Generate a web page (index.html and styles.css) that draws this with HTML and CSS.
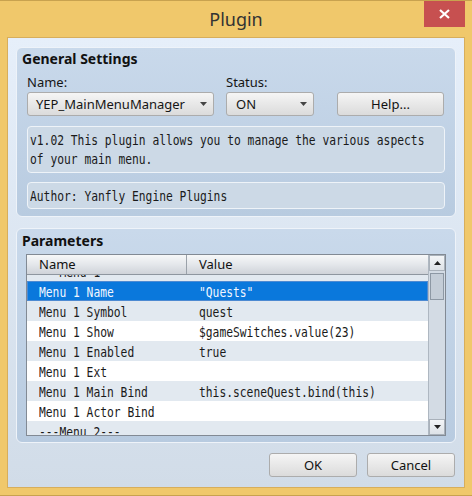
FILE: index.html
```html
<!DOCTYPE html>
<html>
<head>
<meta charset="utf-8">
<title>Plugin</title>
<link rel="stylesheet" href="styles.css">
</head>
<body>
<div class="window">
  <div class="titlebar">
    <div class="title">Plugin</div>
    <div class="close"><svg width="11" height="10" viewBox="0 0 11 10"><path d="M1 1L10 9M10 1L1 9" stroke="#fff" stroke-width="2.2" fill="none"/></svg></div>
  </div>
  <div class="client">
    <section class="group general">
      <div class="group-title">General Settings</div>
      <div class="fields">
        <div class="field name-field">
          <label>Name:</label>
          <div class="combo"><span>YEP_MainMenuManager</span><svg width="7" height="4" viewBox="0 0 7 4"><path d="M0 0H7L3.5 4Z" fill="#444"/></svg></div>
        </div>
        <div class="field status-field">
          <label>Status:</label>
          <div class="combo status"><span>ON</span><svg width="7" height="4" viewBox="0 0 7 4"><path d="M0 0H7L3.5 4Z" fill="#444"/></svg></div>
        </div>
        <button class="btn help">Help...</button>
      </div>
      <div class="textbox desc"><span class="mono">v1.02 This plugin allows you to manage the various aspects<br>of your main menu.</span></div>
      <div class="textbox author"><span class="mono">Author: Yanfly Engine Plugins</span></div>
    </section>
    <section class="group params">
      <div class="group-title">Parameters</div>
      <div class="table">
        <div class="table-main">
          <div class="thead"><div class="th name">Name</div><div class="th value">Value</div></div>
          <div class="tbody">
            <div class="row alt"><div class="cell"><span class="mono">---Menu 1---</span></div><div class="cell"></div></div>
            <div class="row sel"><div class="cell"><span class="mono">Menu 1 Name</span></div><div class="cell"><span class="mono">"Quests"</span></div></div>
            <div class="row alt"><div class="cell"><span class="mono">Menu 1 Symbol</span></div><div class="cell"><span class="mono">quest</span></div></div>
            <div class="row"><div class="cell"><span class="mono">Menu 1 Show</span></div><div class="cell"><span class="mono">$gameSwitches.value(23)</span></div></div>
            <div class="row alt"><div class="cell"><span class="mono">Menu 1 Enabled</span></div><div class="cell"><span class="mono">true</span></div></div>
            <div class="row"><div class="cell"><span class="mono">Menu 1 Ext</span></div><div class="cell"></div></div>
            <div class="row alt"><div class="cell"><span class="mono">Menu 1 Main Bind</span></div><div class="cell"><span class="mono">this.sceneQuest.bind(this)</span></div></div>
            <div class="row"><div class="cell"><span class="mono">Menu 1 Actor Bind</span></div><div class="cell"></div></div>
            <div class="row alt"><div class="cell"><span class="mono">---Menu 2---</span></div><div class="cell"></div></div>
          </div>
        </div>
        <div class="scrollbar">
          <div class="sb-btn"><svg width="7" height="4" viewBox="0 0 7 4"><path d="M0 4H7L3.5 0Z" fill="#222"/></svg></div>
          <div class="sb-thumb"></div>
          <div class="sb-space"></div>
          <div class="sb-btn"><svg width="7" height="4" viewBox="0 0 7 4"><path d="M0 0H7L3.5 4Z" fill="#222"/></svg></div>
        </div>
      </div>
    </section>
    <div class="actions">
      <button class="btn">OK</button>
      <button class="btn">Cancel</button>
    </div>
  </div>
</div>
</body>
</html>
```

FILE: styles.css
```css
* { box-sizing: border-box; }
html, body { margin: 0; padding: 0; }
body {
  width: 472px;
  height: 496px;
  overflow: hidden;
  font-family: "Noto Sans", sans-serif;
  font-size: 13px;
  color: #151515;
}
.window {
  width: 472px;
  height: 496px;
  background: #f0c86b;
  border-top: 1px solid #c8a24f;
  border-bottom: 1px solid #c8a24f;
  padding: 0 7px;
  display: flex;
  flex-direction: column;
}
.titlebar {
  height: 36px;
  flex: none;
  display: grid;
  grid-template-columns: 1fr auto 1fr;
}
.title {
  grid-column: 2;
  font-size: 18px;
  line-height: 36px;
  color: #333;
}
.close {
  grid-column: 3;
  justify-self: end;
  width: 41px;
  height: 26px;
  background: #c75050;
  display: flex;
  align-items: center;
  justify-content: center;
}
.client {
  height: 451px;
  flex: none;
  border: 1px solid #d7ae5c;
  background: linear-gradient(#e6effa, #d1dce8);
  padding: 9px 8px 0 8px;
  display: flex;
  flex-direction: column;
}
.group {
  border: 1px solid #eef3f9;
  border-radius: 6px;
  background: linear-gradient(#c9d9eb, #b8cbe0);
  padding: 2px 10px 7px 10px;
  flex: none;
}
.group-title {
  font-weight: 700;
  font-size: 14px;
  line-height: 18px;
  margin-left: -5px;
  color: #111;
}
.general { height: 170px; }
.params {
  height: 215px;
  margin-top: 11px;
  padding-top: 3px;
  padding-bottom: 6px;
}
.fields {
  display: flex;
  align-items: flex-end;
  margin-top: 6px;
}
.field { display: flex; flex-direction: column; }
.field label { line-height: 16px; margin-bottom: 2px; }
.name-field { width: 187px; }
.status-field { width: 88px; margin-left: 12px; }
.combo, .btn {
  height: 24px;
  border: 1px solid #acacac;
  border-radius: 3px;
  background: linear-gradient(#f5f5f5, #e8e8e8 50%, #dbdbdb);
}
.combo {
  display: flex;
  align-items: center;
  justify-content: space-between;
  padding: 0 6px 0 8px;
}
.combo.status { padding-left: 9px; }
.btn {
  width: 88px;
  font-family: inherit;
  font-size: 13px;
  color: #111;
  padding: 0;
}
.help { width: 107px; margin-left: 23px; }
.textbox {
  border: 1px solid #eef3f8;
  border-radius: 4px;
  background: #ccd9e6;
  padding: 4px 2px 0 2px;
  overflow: hidden;
}
.desc { height: 47px; margin-top: 10px; }
.author { height: 27px; margin-top: 9px; }
.mono {
  font-family: "DejaVu Sans Mono", monospace;
  font-size: 14.5px;
  line-height: 19px;
  display: inline-block;
  white-space: pre;
  transform: scaleX(0.779);
  transform-origin: 0 0;
  color: #1a1a1a;
}
.table {
  margin: 4px 0 0 -1px;
  width: 420px;
  height: 182px;
  border: 1px solid #828a94;
  display: flex;
  background: #fff;
}
.table-main {
  flex: 1;
  display: flex;
  flex-direction: column;
  overflow: hidden;
}
.thead {
  height: 20px;
  flex: none;
  display: grid;
  grid-template-columns: 160px 1fr;
  border-bottom: 1px solid #8e969f;
  background: linear-gradient(#f7f8f9, #e4e7eb 50%, #cfd3d9);
  position: relative;
  z-index: 1;
}
.th { line-height: 19px; padding-left: 12px; color: #111; }
.th.name { border-right: 1px solid #9aa1a9; }
.tbody { flex: 1; overflow: hidden; }
.row {
  height: 20px;
  display: grid;
  grid-template-columns: 160px 1fr;
  background: #fff;
}
.row.alt { background: #e2e9f0; }
.row:first-child { margin-top: -14px; }
.cell {
  padding: 2px 0 0 12px;
  height: 20px;
  line-height: 18px;
  overflow: hidden;
}
.cell .mono { line-height: 18px; }
.row.sel {
  background: #0a78dc;
  box-shadow: inset 0 0 0 1px #4d8ad2;
}
.row.sel .mono { color: #f2f7ff; }
.scrollbar {
  width: 17px;
  flex: none;
  background: #d3dbe4;
  border-left: 1px solid #aeb7c1;
  display: flex;
  flex-direction: column;
}
.sb-btn {
  height: 16px;
  flex: none;
  border: 1px solid #a9b1ba;
  background: linear-gradient(#f3f5f7, #dde2e7);
  display: flex;
  align-items: center;
  justify-content: center;
}
.sb-thumb {
  height: 27px;
  flex: none;
  margin: 2px 1px 0 1px;
  border: 1px solid #8d98a4;
  background: #c4cdd7;
}
.sb-space { flex: 1; }
.actions {
  display: flex;
  justify-content: flex-end;
  gap: 10px;
  margin-top: 10px;
  padding-right: 1px;
}
```
